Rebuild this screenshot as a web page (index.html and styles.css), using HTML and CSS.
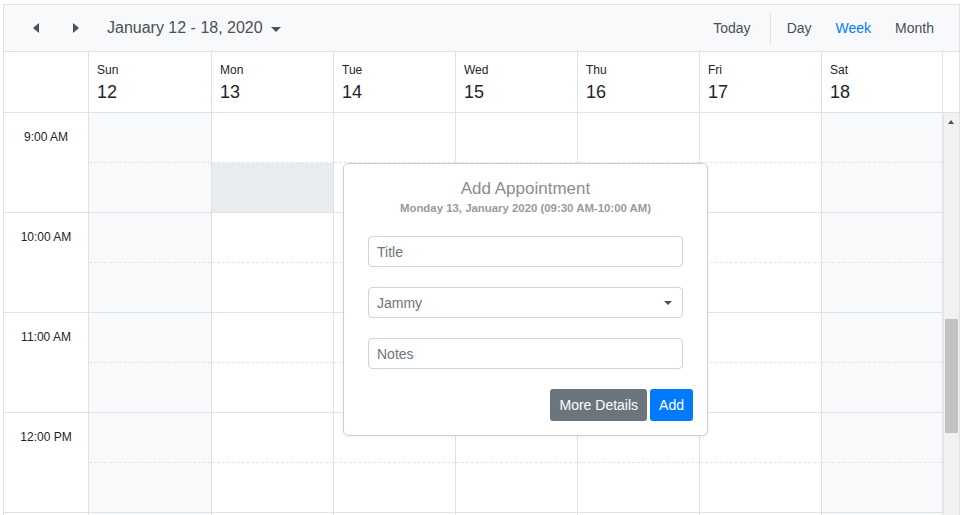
FILE: index.html
```html
<!DOCTYPE html>
<html>
<head>
<meta charset="utf-8">
<link rel="stylesheet" href="styles.css">
</head>
<body>
<div class="scheduler">
  <div class="toolbar">
    <div class="nav">
      <button class="arrow"><span class="tri-left"></span></button>
      <button class="arrow"><span class="tri-right"></span></button>
      <div class="range">January 12 - 18, 2020 <span class="caret"></span></div>
    </div>
    <div class="views">
      <span class="view today">Today</span>
      <span class="sep"></span>
      <span class="view">Day</span>
      <span class="view active">Week</span>
      <span class="view">Month</span>
    </div>
  </div>
  <div class="header">
    <div class="hcell corner"></div>
    <div class="hcell"><div class="dname">Sun</div><div class="dnum">12</div></div>
    <div class="hcell"><div class="dname">Mon</div><div class="dnum">13</div></div>
    <div class="hcell"><div class="dname">Tue</div><div class="dnum">14</div></div>
    <div class="hcell"><div class="dname">Wed</div><div class="dnum">15</div></div>
    <div class="hcell"><div class="dname">Thu</div><div class="dnum">16</div></div>
    <div class="hcell"><div class="dname">Fri</div><div class="dnum">17</div></div>
    <div class="hcell"><div class="dname">Sat</div><div class="dnum">18</div></div>
    <div class="hcell spacer"></div>
  </div>
  <div class="bodywrap">
    <div class="grid">
      <div class="time">9:00 AM</div>
      <div class="slot weekend"><div class="half"></div><div class="half"></div></div>
      <div class="slot"><div class="half"></div><div class="half selected"></div></div>
      <div class="slot"><div class="half"></div><div class="half"></div></div>
      <div class="slot"><div class="half"></div><div class="half"></div></div>
      <div class="slot"><div class="half"></div><div class="half"></div></div>
      <div class="slot"><div class="half"></div><div class="half"></div></div>
      <div class="slot weekend"><div class="half"></div><div class="half"></div></div>

      <div class="time">10:00 AM</div>
      <div class="slot weekend"><div class="half"></div><div class="half"></div></div>
      <div class="slot"><div class="half"></div><div class="half"></div></div>
      <div class="slot"><div class="half"></div><div class="half"></div></div>
      <div class="slot"><div class="half"></div><div class="half"></div></div>
      <div class="slot"><div class="half"></div><div class="half"></div></div>
      <div class="slot"><div class="half"></div><div class="half"></div></div>
      <div class="slot weekend"><div class="half"></div><div class="half"></div></div>

      <div class="time">11:00 AM</div>
      <div class="slot weekend"><div class="half"></div><div class="half"></div></div>
      <div class="slot"><div class="half"></div><div class="half"></div></div>
      <div class="slot"><div class="half"></div><div class="half"></div></div>
      <div class="slot"><div class="half"></div><div class="half"></div></div>
      <div class="slot"><div class="half"></div><div class="half"></div></div>
      <div class="slot"><div class="half"></div><div class="half"></div></div>
      <div class="slot weekend"><div class="half"></div><div class="half"></div></div>

      <div class="time">12:00 PM</div>
      <div class="slot weekend"><div class="half"></div><div class="half"></div></div>
      <div class="slot"><div class="half"></div><div class="half"></div></div>
      <div class="slot"><div class="half"></div><div class="half"></div></div>
      <div class="slot"><div class="half"></div><div class="half"></div></div>
      <div class="slot"><div class="half"></div><div class="half"></div></div>
      <div class="slot"><div class="half"></div><div class="half"></div></div>
      <div class="slot weekend"><div class="half"></div><div class="half"></div></div>

      <div class="time"></div>
      <div class="slot weekend"><div class="half"></div><div class="half"></div></div>
      <div class="slot"><div class="half"></div><div class="half"></div></div>
      <div class="slot"><div class="half"></div><div class="half"></div></div>
      <div class="slot"><div class="half"></div><div class="half"></div></div>
      <div class="slot"><div class="half"></div><div class="half"></div></div>
      <div class="slot"><div class="half"></div><div class="half"></div></div>
      <div class="slot weekend"><div class="half"></div><div class="half"></div></div>
    </div>
    <div class="scrollbar">
      <div class="up"></div>
      <div class="thumb"></div>
    </div>
  </div>

  <div class="popup">
    <div class="ptitle">Add Appointment</div>
    <div class="psub">Monday 13, January 2020 (09:30 AM-10:00 AM)</div>
    <div class="field">Title</div>
    <div class="field select">Jammy <span class="scaret"></span></div>
    <div class="field">Notes</div>
    <div class="actions">
      <button class="btn secondary">More Details</button>
      <button class="btn primary">Add</button>
    </div>
  </div>
</div>
</body>
</html>
```

FILE: styles.css
```css
* { box-sizing: border-box; }
html, body { margin: 0; padding: 0; overflow: hidden; height: 515px; background: #fff; }
body { font-family: "Liberation Sans", Arial, sans-serif; color: #212529; }

.scheduler {
  position: relative;
  margin: 4px 0 0 3px;
  width: 957px;
  height: 540px;
  border: 1px solid #dee2e6;
  border-bottom: none;
}

.toolbar {
  height: 47px;
  background: #f8f9fa;
  border-bottom: 1px solid #dee2e6;
  display: flex;
  align-items: center;
  justify-content: space-between;
}
.nav { display: flex; align-items: center; padding-left: 12px; }
.arrow {
  border: none; background: transparent; padding: 0;
  width: 40px; height: 30px;
  display: flex; align-items: center; justify-content: center;
}
.tri-left, .tri-right { width: 0; height: 0; border-top: 5px solid transparent; border-bottom: 5px solid transparent; }
.tri-left { border-right: 6px solid #495057; }
.tri-right { border-left: 6px solid #495057; }
.range {
  margin-left: 11px;
  font-size: 16px;
  color: #495057;
  display: flex; align-items: center;
}
.caret {
  display: inline-block; width: 0; height: 0; margin-left: 8px; margin-top: 2px;
  border-left: 5px solid transparent; border-right: 5px solid transparent;
  border-top: 5px solid #495057;
}
.views { display: flex; align-items: center; padding-right: 25px; font-size: 14px; color: #495057; }
.view { padding: 0 12px; }
.today { margin-right: 7px; }
.sep { width: 1px; height: 31px; background: #dee2e6; margin-right: 4px; }
.view.active { color: #007bff; }
.views .view:last-child { padding-right: 0; }

.header {
  display: grid;
  grid-template-columns: 85px 123px 122px 122px 122px 122px 122px 121px 16px;
  height: 61px;
  border-bottom: 1px solid #dee2e6;
}
.hcell { border-right: 1px solid #dee2e6; padding: 11px 0 0 8px; }
.hcell.spacer { border-right: none; }
.dname { font-size: 12px; line-height: 14px; }
.dnum { font-size: 18px; line-height: 21px; margin-top: 5px; }

.bodywrap { display: flex; }
.grid {
  display: grid;
  grid-template-columns: 85px 123px 122px 122px 122px 122px 122px 121px;
  grid-auto-rows: 100px;
  width: 939px;
}
.time {
  border-right: 1px solid #dee2e6;
  border-bottom: 1px solid #dee2e6;
  font-size: 12px;
  text-align: center;
  padding-top: 17px;
}
.slot {
  border-right: 1px solid #dee2e6;
  border-bottom: 1px solid #dee2e6;
  display: flex; flex-direction: column;
}
.slot.weekend { background: #f8f9fa; }
.half { flex: 1; }
.half:first-child { border-bottom: 1px dashed #e3e5e8; }
.half.selected { background: #e9ecef; }

.scrollbar {
  width: 16px;
  height: 410px;
  background: #f1f1f1;
  border-left: 1px solid #e6e6e6;
  position: relative;
}
.up {
  position: absolute; left: 4px; top: 7px;
  width: 0; height: 0;
  border-left: 3.5px solid transparent; border-right: 3.5px solid transparent;
  border-bottom: 4px solid #505050;
}
.thumb {
  position: absolute; left: 1px; top: 206px;
  width: 13px; height: 114px;
  background: #c1c1c1;
}

.popup {
  position: absolute;
  left: 339px; top: 158px;
  width: 365px; height: 273px;
  background: #fff;
  border: 1px solid #cfcfcf;
  border-radius: 5px;
  box-shadow: 0 1px 3px rgba(0,0,0,0.06);
  padding: 16px 14px 0 14px;
}
.ptitle { text-align: center; font-size: 17px; color: #8c8c8c; line-height: 18px; }
.psub { text-align: center; font-size: 11.4px; font-weight: bold; color: #9a9a9a; margin-top: 3px; line-height: 14px; }
.field {
  width: 315px; height: 31px;
  margin-left: 10px;
  border: 1px solid #ced4da;
  border-radius: 4px;
  font-size: 14px;
  color: #6c757d;
  padding: 0 8px;
  display: flex; align-items: center;
  margin-top: 20px;
  position: relative;
}
.psub + .field { margin-top: 21px; }
.scaret {
  position: absolute; right: 10px; top: 13px;
  width: 0; height: 0;
  border-left: 4px solid transparent; border-right: 4px solid transparent;
  border-top: 4px solid #495057;
}
.actions { display: flex; justify-content: flex-end; gap: 3px; margin-top: 20px; }
.btn {
  border: none; border-radius: 3px; color: #fff;
  font-family: "Liberation Sans", Arial, sans-serif; font-size: 14px;
  height: 32px; padding: 0 9px;
}
.btn.secondary { background: #6c757d; }
.btn.primary { background: #007bff; }
```
